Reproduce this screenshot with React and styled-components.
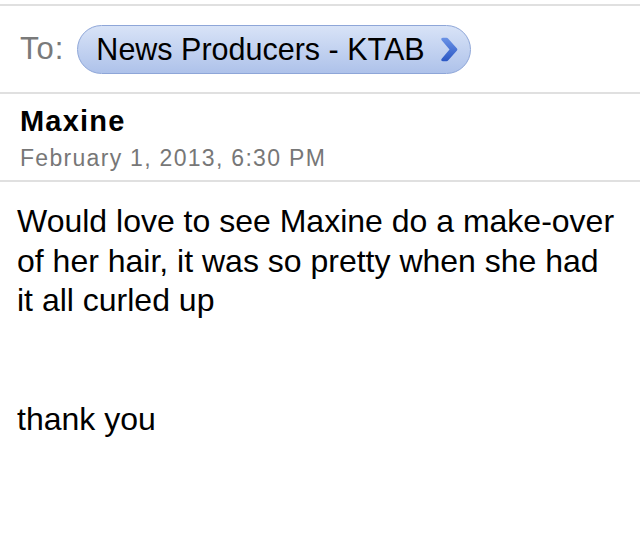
import React from "react";
import styled, { createGlobalStyle } from "styled-components";

const Global = createGlobalStyle`
  html, body { margin: 0; padding: 0; background: #fff; }
  body { font-family: "Liberation Sans", Arial, sans-serif; -webkit-font-smoothing: antialiased; }
`;

const Page = styled.div`
  width: 640px;
  height: 556px;
  background: #fff;
  padding-top: 4px;
  box-sizing: border-box;
  overflow: hidden;
`;

const Divider = styled.div`
  height: 2px;
  background: #e0e0e0;
`;

const ToRow = styled.div`
  display: flex;
  align-items: center;
  height: 86px;
  padding-left: 20px;
  gap: 13px;
`;

const Label = styled.span`
  font-size: 31px;
  letter-spacing: 1px;
  color: #7a7a7a;
`;

const Pill = styled.div`
  display: flex;
  align-items: center;
  height: 47px;
  padding: 0 12px 0 18px;
  border-radius: 25px;
  border: 1px solid #8ea6d8;
  background: linear-gradient(#d8e3f7, #aec2ea);
  gap: 15px;
  font-size: 30.5px;
  color: #000;
`;

const Header = styled.div`
  height: 86px;
  padding: 13px 0 0 20px;
  box-sizing: border-box;
`;

const Sender = styled.div`
  font-size: 29px;
  letter-spacing: 1.2px;
  font-weight: bold;
  color: #000;
  line-height: 28px;
`;

const DateLine = styled.div`
  font-size: 23px;
  letter-spacing: 1.3px;
  color: #777;
  line-height: 22px;
  margin-top: 12px;
`;

const Body = styled.div`
  padding: 20px 10px 0 17px;
  font-size: 32px;
  line-height: 39.6px;
  color: #000;
`;

const Para = styled.p`
  margin: 0 0 ${(p) => p.$gap || 0}px;
`;

const Chevron = () => (
  <svg width="18" height="25" viewBox="0 0 18 25">
    <defs>
      <linearGradient id="cg" x1="0" y1="0" x2="0" y2="1">
        <stop offset="0" stopColor="#6a92e6" />
        <stop offset="1" stopColor="#2b57c4" />
      </linearGradient>
    </defs>
    <path
      d="M1.5 3 Q0.5 1 3 0.8 L6.5 0.8 Q7.5 0.8 8.5 2 L17 11.5 Q17.8 12.5 17 13.5 L8.5 23 Q7.5 24.2 6.5 24.2 L3 24.2 Q0.5 24 1.5 22 L9.5 12.5 Z"
      fill="url(#cg)"
    />
  </svg>
);

export default function App() {
  return (
    <Page>
      <Global />
      <Divider />
      <ToRow>
        <Label>To:</Label>
        <Pill>
          <span>News Producers - KTAB</span>
          <Chevron />
        </Pill>
      </ToRow>
      <Divider />
      <Header>
        <Sender>Maxine</Sender>
        <DateLine>February 1, 2013, 6:30 PM</DateLine>
      </Header>
      <Divider />
      <Body>
        <Para $gap={79.2}>
          Would love to see Maxine do a make-over
          <br />
          of her hair, it was so pretty when she had
          <br />
          it all curled up
        </Para>
        <Para>thank you</Para>
      </Body>
    </Page>
  );
}
